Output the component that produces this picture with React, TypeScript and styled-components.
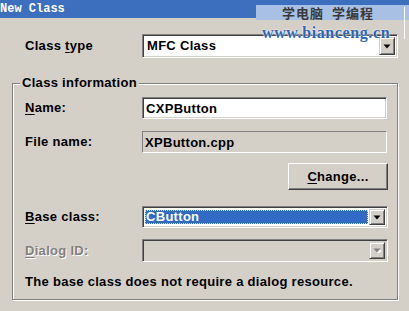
import styled, { createGlobalStyle } from "styled-components";

const GlobalStyle = createGlobalStyle`
  html, body {
    margin: 0;
    padding: 0;
    background: #d4d0c8;
  }
  body {
    font-family: "Liberation Sans", Arial, sans-serif;
    font-size: 13px;
    font-weight: bold;
    letter-spacing: 0.3px;
    color: #000;
  }
`;

export default function App() {
  return (
    <>
      <GlobalStyle />
      <Window>
        <TitleBar>
          <TitleText>New Class</TitleText>
        </TitleBar>

        <Body>
          <TopRow>
            <Label>
              Class <Key>t</Key>ype
            </Label>
            <Combo $h={24}>
              <ComboValue>MFC Class</ComboValue>
              <DropButton>
                <Arrow />
              </DropButton>
            </Combo>
          </TopRow>

          <Group>
            <Legend>Class information</Legend>

            <FormRow>
              <Label>
                <Key>N</Key>ame:
              </Label>
              <EditBox>CXPButton</EditBox>
            </FormRow>

            <FormRow $mt={12}>
              <Label>File name:</Label>
              <ReadOnlyBox>XPButton.cpp</ReadOnlyBox>
            </FormRow>

            <ButtonRow>
              <PushButton>
                <Key>C</Key>hange...
              </PushButton>
            </ButtonRow>

            <FormRow $mt={16}>
              <Label>
                <Key>B</Key>ase class:
              </Label>
              <Combo $h={22}>
                <SelectedValue>CButton</SelectedValue>
                <DropButton>
                  <Arrow />
                </DropButton>
              </Combo>
            </FormRow>

            <FormRow $mt={11}>
              <Label $disabled>
                <Key>D</Key>ialog ID:
              </Label>
              <Combo $h={23} $disabled>
                <ComboValue />
                <DropButton>
                  <Arrow $disabled />
                </DropButton>
              </Combo>
            </FormRow>

            <Note>The base class does not require a dialog resource.</Note>
          </Group>
        </Body>

        <Watermark>
          <WatermarkBand>学电脑&nbsp;&nbsp;学编程</WatermarkBand>
          <WatermarkUrl>www.bianceng.cn</WatermarkUrl>
        </Watermark>
      </Window>
    </>
  );
}

function Arrow({ $disabled }: { $disabled?: boolean }) {
  return (
    <svg width="8" height="5" viewBox="0 0 8 5">
      {$disabled && <path d="M2 2h7l-3.5 4z" fill="#fff" />}
      <path d="M0.5 0.5h7l-3.5 4z" fill={$disabled ? "#808080" : "#000"} />
    </svg>
  );
}

const Window = styled.div`
  position: relative;
  width: 409px;
  height: 311px;
  overflow: hidden;
  background: #d4d0c8;
`;

const TitleBar = styled.div`
  height: 18px;
  background: #3c6fbd;
  display: flex;
  align-items: center;
`;

const TitleText = styled.span`
  margin-left: 0;
  color: #fff;
  font-family: "Liberation Mono", "Courier New", monospace;
  font-size: 12px;
  font-weight: bold;
  letter-spacing: 0;
`;

const Body = styled.div`
  padding: 16px 11px 0 12px;
`;

const TopRow = styled.div`
  display: grid;
  grid-template-columns: 117px 1fr;
  align-items: center;
  padding-left: 13px;
`;

const Label = styled.span<{ $disabled?: boolean }>`
  line-height: 14px;
  white-space: nowrap;
  color: ${(p) => (p.$disabled ? "#808080" : "#000")};
  text-shadow: ${(p) => (p.$disabled ? "1px 1px 0 #fff" : "none")};
`;

const Key = styled.span`
  text-decoration: underline;
  text-underline-offset: 2px;
`;

const Sunken = styled.div`
  box-sizing: border-box;
  border: 1px solid;
  border-color: #808080 #fff #fff #808080;
  box-shadow: inset 1px 1px 0 #404040, inset -1px -1px 0 #d4d0c8;
`;

const Combo = styled(Sunken)<{ $h: number; $disabled?: boolean }>`
  height: ${(p) => p.$h}px;
  padding: 2px;
  display: flex;
  align-items: stretch;
  background: ${(p) => (p.$disabled ? "#d4d0c8" : "#fff")};
`;

const ComboValue = styled.div`
  flex: 1;
  padding-left: 2px;
  display: flex;
  align-items: center;
  line-height: 14px;
`;

const SelectedValue = styled(ComboValue)`
  margin: 1px 1px 1px 0;
  padding-left: 1px;
  background: #316ac5;
  color: #fff;
  outline: 1px dotted #e8e4a0;
  outline-offset: -1px;
`;

const DropButton = styled.div`
  width: 16px;
  box-sizing: border-box;
  display: flex;
  align-items: center;
  justify-content: center;
  background: #d4d0c8;
  border: 1px solid;
  border-color: #d4d0c8 #404040 #404040 #d4d0c8;
  box-shadow: inset 1px 1px 0 #fff, inset -1px -1px 0 #808080;
`;

const Group = styled.fieldset`
  margin: 18px 0 0;
  min-width: 0;
  padding: 7px 9px 10px 12px;
  border: 1px solid #808080;
  box-shadow: inset 1px 1px 0 #fff, 1px 1px 0 #fff;
`;

const Legend = styled.legend`
  margin-left: -5px;
  padding: 0 2px;
  line-height: 14px;
  background: #d4d0c8;
`;

const FormRow = styled.div<{ $mt?: number }>`
  display: grid;
  grid-template-columns: 117px 1fr;
  align-items: center;
  margin-top: ${(p) => p.$mt ?? 0}px;
`;

const EditBox = styled(Sunken)`
  height: 22px;
  margin-right: 1px;
  padding: 0 3px;
  display: flex;
  align-items: center;
  background: #fff;
`;

const ReadOnlyBox = styled.div`
  box-sizing: border-box;
  height: 22px;
  margin-right: 1px;
  padding: 0 2px;
  display: flex;
  align-items: center;
  border: 1px solid;
  border-color: #808080 #fff #fff #808080;
`;

const ButtonRow = styled.div`
  display: flex;
  justify-content: flex-end;
  margin-top: 10px;
`;

const PushButton = styled.div`
  box-sizing: border-box;
  width: 100px;
  height: 27px;
  display: flex;
  align-items: center;
  justify-content: center;
  background: #d4d0c8;
  border: 1px solid;
  border-color: #fff #404040 #404040 #fff;
  box-shadow: inset -1px -1px 0 #808080;
`;

const Note = styled.div`
  margin-top: 13px;
  line-height: 14px;
  white-space: nowrap;
`;

const Watermark = styled.div`
  position: absolute;
  top: 5px;
  left: 256px;
  width: 153px;
  pointer-events: none;

  &::after {
    content: "";
    position: absolute;
    top: 2px;
    right: 4px;
    width: 1px;
    height: 32px;
    background: #fff;
  }
`;

const WatermarkBand = styled.div`
  height: 15px;
  padding-left: 26px;
  background: #a7c0e3;
  color: #3a3a3a;
  font-family: "Noto Sans CJK SC", sans-serif;
  font-size: 13px;
  font-weight: bold;
  line-height: 15px;
  letter-spacing: 1px;
`;

const WatermarkUrl = styled.div`
  margin-top: 4px;
  padding-left: 6px;
  color: #2d64b8;
  font-family: "Liberation Serif", "Times New Roman", serif;
  font-size: 16px;
  font-weight: bold;
  line-height: 18px;
  letter-spacing: 0.6px;
  text-shadow: 0 0 2px #fff, 0 0 1px #fff;
`;
